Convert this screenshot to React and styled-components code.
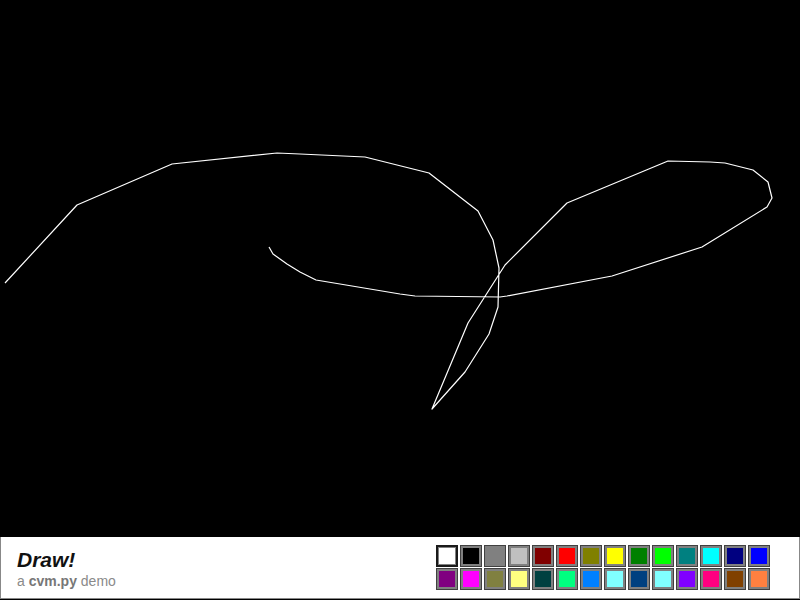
import styled, { createGlobalStyle } from "styled-components";

const GlobalStyle = createGlobalStyle`
  html, body {
    margin: 0;
    padding: 0;
    background: #000;
    font-family: "Liberation Sans", Arial, sans-serif;
  }
`;

const stroke = [
  [5, 283], [77, 205], [172, 164], [277, 153], [300, 154], [365, 157],
  [429, 173], [478, 211], [493, 240], [499, 268], [498, 307], [489, 334],
  [465, 372], [432, 409], [468, 323], [505, 265], [567, 203], [668, 161],
  [710, 162], [725, 163], [753, 170], [768, 182], [772, 198], [767, 207],
  [702, 247], [612, 276], [507, 296], [500, 297], [415, 296], [400, 294],
  [316, 280], [300, 272], [287, 264], [273, 254], [269, 247],
];

const palette = [
  "#ffffff", "#000000", "#808080", "#c0c0c0", "#800000", "#ff0000", "#808000",
  "#ffff00", "#008000", "#00ff00", "#008080", "#00ffff", "#000080", "#0000ff",
  "#800080", "#ff00ff", "#808040", "#ffff80", "#004040", "#00ff80", "#0080ff",
  "#80ffff", "#004080", "#80ffff", "#8000ff", "#ff0080", "#804000", "#ff8040",
];

export default function App() {
  return (
    <>
      <GlobalStyle />
      <Page>
        <Canvas>
          <svg width="800" height="537" viewBox="0 0 800 537">
            <polyline
              points={stroke.map((p) => p.join(",")).join(" ")}
              fill="none"
              stroke="#fff"
              strokeWidth="1.2"
              strokeLinejoin="round"
            />
          </svg>
        </Canvas>
        <Footer>
          <Brand>
            <Title>Draw!</Title>
            <Sub>
              a <b>cvm.py</b> demo
            </Sub>
          </Brand>
          <Swatches>
            {palette.map((c, i) => (
              <Swatch key={i} $color={c} $selected={i === 0} />
            ))}
          </Swatches>
        </Footer>
      </Page>
    </>
  );
}

const Page = styled.div`
  width: 800px;
  height: 600px;
  display: flex;
  flex-direction: column;
  background: #000;
`;

const Canvas = styled.div`
  height: 537px;
  svg {
    display: block;
  }
`;

const Footer = styled.div`
  height: 62px;
  box-sizing: border-box;
  background: #fff;
  border: 1px solid #888;
  border-top: none;
  display: flex;
  justify-content: space-between;
  padding: 0 29px 0 16px;
`;

const Brand = styled.div`
  display: flex;
  flex-direction: column;
  padding-top: 11px;
`;

const Title = styled.div`
  font-size: 21px;
  line-height: 24px;
  font-weight: bold;
  font-style: italic;
  color: #111;
`;

const Sub = styled.div`
  font-size: 14px;
  line-height: 18px;
  color: #8a8a8a;
  b {
    color: #777;
  }
`;

const Swatches = styled.div`
  display: grid;
  grid-template-columns: repeat(14, 22px);
  grid-auto-rows: 22px;
  column-gap: 2px;
  row-gap: 1px;
  padding-top: 8px;
`;

const Swatch = styled.div`
  box-sizing: border-box;
  background: ${(p) => p.$color};
  border: ${(p) => (p.$selected ? "2px solid #1a1a1a" : "1px solid #404040")};
  box-shadow: inset 0 0 0 ${(p) => (p.$selected ? "1px" : "2px")} #808080;
`;
